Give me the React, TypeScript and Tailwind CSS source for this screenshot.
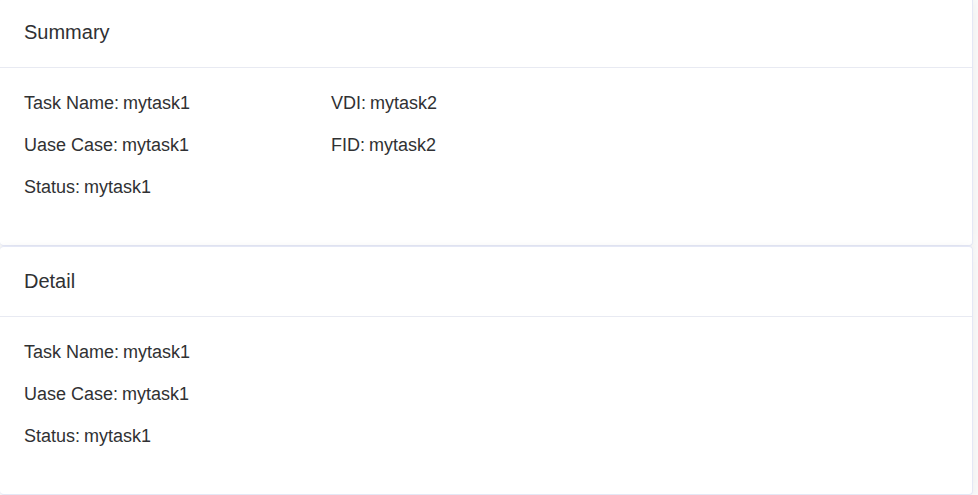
type Item = { label: string; value: string };

function Card({ title, columns }: { title: string; columns: Item[][] }) {
  return (
    <section className="rounded border border-l-0 border-[#e4e7f5] bg-white shadow-[0_2px_12px_0_rgba(0,0,0,0.06)]">
      <h2 className="border-b border-[#e8eaf2] px-6 pt-5 pb-[21px] text-xl leading-7">{title}</h2>
      <div className="grid grid-cols-[307px_1fr] px-6 pt-[23px] pb-[46px]">
        {columns.map((items, index) => (
          <dl key={index} className="flex flex-col gap-[18px]">
            {items.map(({ label, value }) => (
              <div key={label} className="flex gap-1">
                <dt>{label}:</dt>
                <dd>{value}</dd>
              </div>
            ))}
          </dl>
        ))}
      </div>
    </section>
  );
}

const task: Item[] = [
  { label: 'Task Name', value: 'mytask1' },
  { label: 'Uase Case', value: 'mytask1' },
  { label: 'Status', value: 'mytask1' },
];

const ids: Item[] = [
  { label: 'VDI', value: 'mytask2' },
  { label: 'FID', value: 'mytask2' },
];

export default function App() {
  return (
    <main className="-mt-[3px] min-h-screen bg-[#fafafa] pr-[5px] font-['Liberation_Sans',Arial,sans-serif] text-lg leading-6 text-[#303133]">
      <Card title="Summary" columns={[task, ids]} />
      <Card title="Detail" columns={[task]} />
    </main>
  );
}
